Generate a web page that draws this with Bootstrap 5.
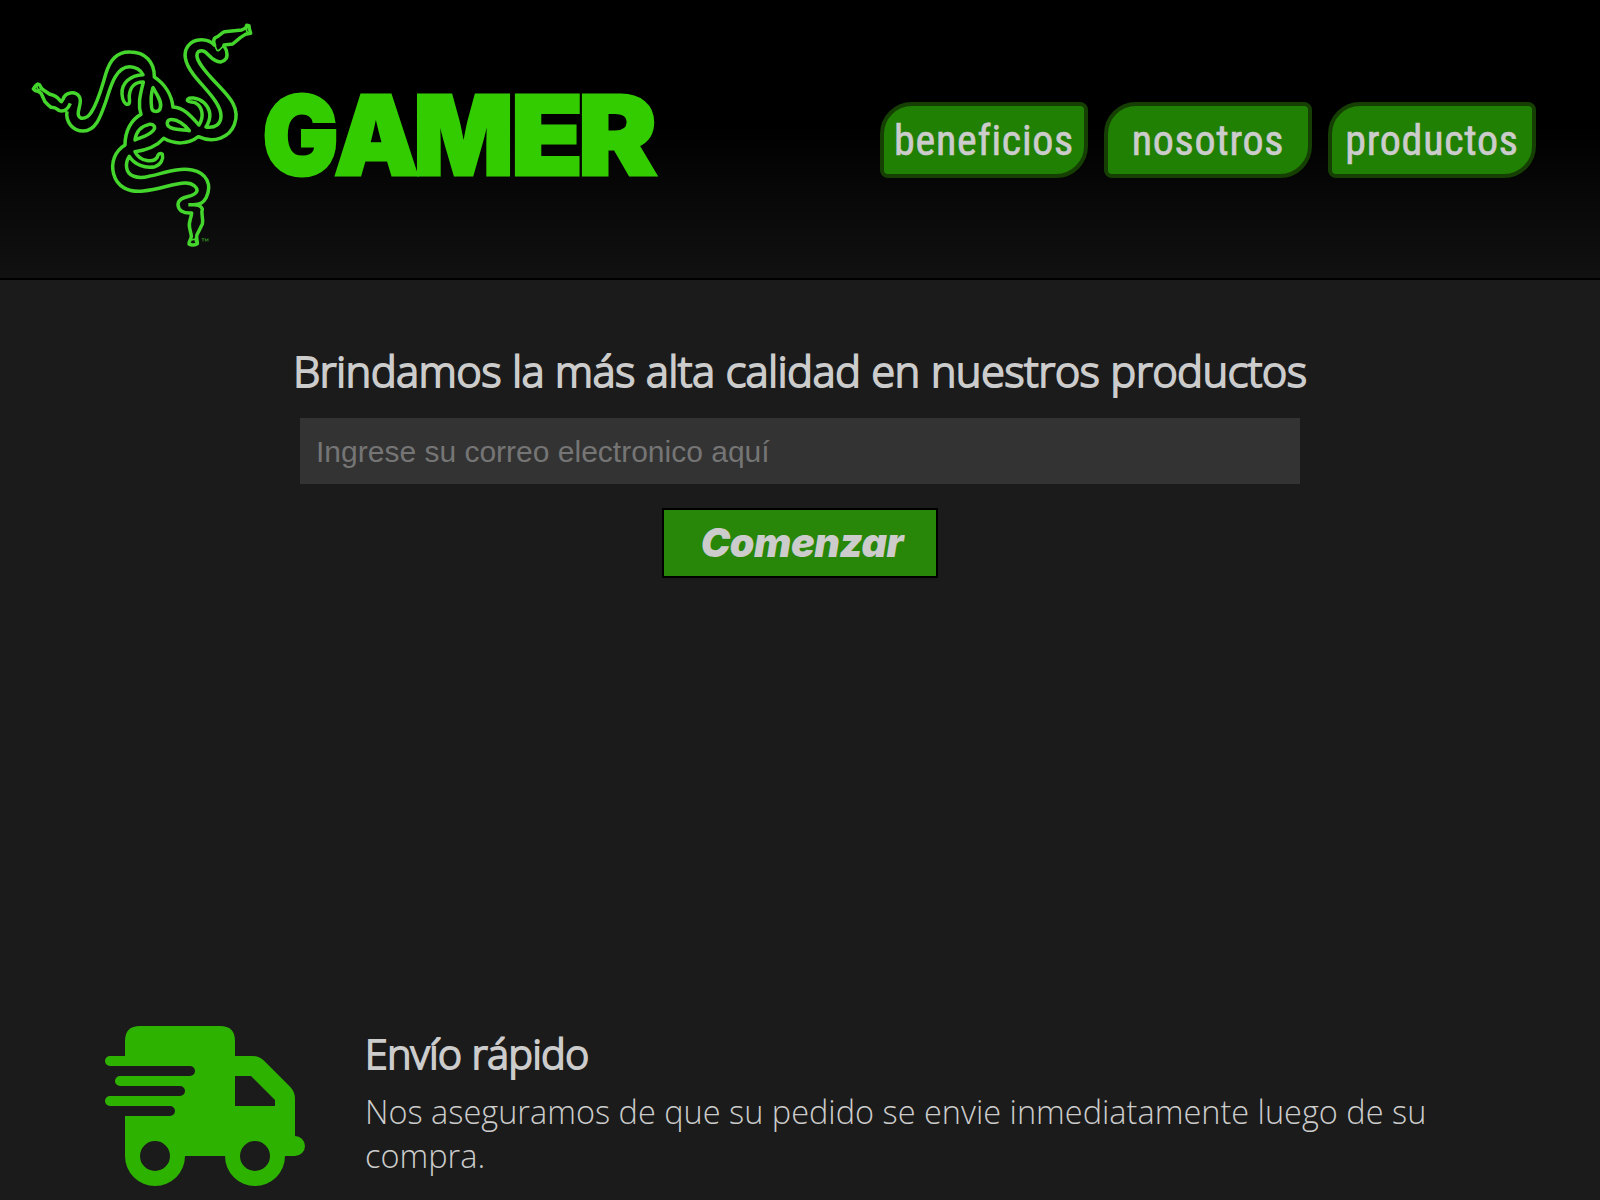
<!DOCTYPE html>
<html lang="es">
<head>
<meta charset="utf-8">
<meta name="viewport" content="width=device-width, initial-scale=1">
<title>Gamer</title>
<link href="https://cdn.jsdelivr.net/npm/bootstrap@5.3.0/dist/css/bootstrap.min.css" rel="stylesheet">
<style>
body{background:#1b1b1b;color:#ccc;font-family:"Open Sans",sans-serif;overflow:hidden;height:1200px}
.site-header{height:280px;background:linear-gradient(#000 0,#000 45%,#111 100%);border-bottom:2px solid #000;padding:10px 64px 18px 20px}
.brand-snakes{width:240px;height:250px;flex:none}
.brand-word{width:420px;height:110px;margin-top:70px;margin-left:-10px;flex:none;overflow:visible}
.brand-word text{font-family:Inter,sans-serif;font-weight:900;font-size:110px;fill:#3c0;stroke:#3c0;stroke-width:3;stroke-linejoin:miter}
.main-nav{gap:16px;margin-top:92px}
.nav-leaf{width:208px;height:76px;border:4px solid #164003;background:#208003;border-radius:32px 8px 32px 8px;color:#ccc;text-decoration:none}
.nav-leaf span{font:400 42px/70px "Roboto Condensed",Roboto,sans-serif;letter-spacing:.72px;white-space:nowrap;-webkit-text-stroke:.6px #ccc}
.hero{height:746px;padding-top:61px}
.hero-title{font-size:42.9px;line-height:60px;letter-spacing:-.2px;margin:0 0 17px;font-weight:300;white-space:nowrap;-webkit-text-stroke:2px #ccc}
.mail-field,.mail-field:focus{width:1000px;height:66px;background:#333;border:0;border-radius:0;padding:2px 16px 0;font:30px "Liberation Sans",Arial,sans-serif;color:#ccc}
.mail-field::placeholder{color:#757575}
.start-btn,.start-btn:hover{width:276px;height:70px;margin-top:24px;border:2px solid #000;border-radius:0;background:#288609;color:#ccc;padding:0 0 1px 4px;font:italic 900 39.500px/60px Inter,sans-serif;letter-spacing:-.4px}
.feature{padding-left:105px;gap:60px}
.feature-icon{width:200px;height:160px;flex:none}
.feature-title{font-size:40.800px;line-height:54px;letter-spacing:-.38px;font-weight:300;margin:0 0 10px;-webkit-text-stroke:2px #ccc}
.feature-text{font-size:32.5px;line-height:44px;font-weight:300;margin:0;width:1130px}
</style>
<script src="https://cdn.jsdelivr.net/npm/bootstrap@5.3.0/dist/js/bootstrap.bundle.min.js"></script>
</head>
<body>
<header class="site-header d-flex align-items-start">
<svg class="brand-snakes" viewBox="0 0 720 750" fill="none" stroke="#44d62c" stroke-width="10.500" stroke-linejoin="round">
<path d="M141 304C136 335 158 363 190 363C229 363 243 315 257 276C269 241 284 170 329 170C347 170 363 181 369 194C330 196 304 220 306 252C307 271 315 283 323 283C334 281 326 267 328 256C331 228 348 215 370 216C362 251 352 281 363 313C335 328 315 362 315 405C284 424 272 458 281 492C291 530 325 548 370 543C419 539 459 520 495 519C520 518 535 535 530 545C522 565 475 554 474 584C475 602 490 611 515 609C514 625 504 637 509 654L514 677C515 689 505 694 507 702C513 706 526 706 532 701C533 691 527 686 531 674L547 642C551 625 542 611 547 597C544 587 532 584 520 584L505 584M520 584C542 584 550 578 559 562C576 526 562 489 516 480C475 472 430 490 386 499C352 508 323 498 320 473C318 461 322 448 328 439C343 464 375 476 405 470C423 464 431 446 427 433C421 427 414 432 412 441C402 458 361 457 345 425C381 420 411 408 431 385C464 404 504 404 535 380C583 402 629 381 643 344C665 287 616 250 577 207C548 175 519 141 535 125C563 112 565 153 602 156C617 153 624 142 620 127C620 116 613 115 612 105L638 102L661 83L676 73L692 70L688 56L687 47L680 46L677 54L665 60L614 65C601 70 600 79 586 83C579 89 581 99 584 106C564 83 522 83 504 108C485 134 499 165 520 193C551 234 604 279 603 319C602 342 586 356 558 351C574 326 573 300 553 279C534 262 503 259 502 271C506 279 517 273 527 279C549 292 552 321 537 345C514 319 491 292 459 291C455 256 435 222 403 201C404 155 374 126 331 126C293 124 270 149 258 190C244 235 235 275 213 308C205 321 197 326 184 325C160 315 191 280 178 260C166 242 136 246 130 266L124 275L116 267C109 257 97 255 88 252L66 237L58 224L53 222L47 227L40 237L46 242L56 245L64 251L75 275L87 287L93 292C105 291 111 297 118 302C134 306 145 294 151 280"/>
<path d="M399 233C393 251 393 279 395 294C397 307 414 307 420 297C429 276 409 251 399 233ZM345 390C348 367 361 349 388 343C402 341 408 352 400 361C386 377 367 380 345 390ZM508 362C494 344 471 326 450 329C439 333 439 346 450 352C466 360 488 359 508 362Z"/>
<path d="M584 106L592 123M612 105C603 115 600 121 592 123M679 54L680 64L688 70M50 225L52 236L62 241M515 690L525 687L528 698" stroke-width="5"/>
<path d="M545 686H553M549 686V695M556 695V686L560 692L564 686V695" stroke-width="1.6"/>
</svg>
<svg class="brand-word" viewBox="0 0 420 110"><text y="94.500"><tspan x="12.500" textLength="76" lengthAdjust="spacingAndGlyphs">G</tspan><tspan x="84" textLength="85" lengthAdjust="spacingAndGlyphs">A</tspan><tspan x="163.500" textLength="100" lengthAdjust="spacingAndGlyphs">M</tspan><tspan x="261" textLength="72" lengthAdjust="spacingAndGlyphs">E</tspan><tspan x="328" textLength="79" lengthAdjust="spacingAndGlyphs">R</tspan></text></svg>
<nav class="main-nav d-flex ms-auto">
<a class="nav-leaf d-flex justify-content-center" href="#beneficios"><span>beneficios</span></a>
<a class="nav-leaf d-flex justify-content-center" href="#nosotros"><span>nosotros</span></a>
<a class="nav-leaf d-flex justify-content-center" href="#productos"><span>productos</span></a>
</nav>
</header>
<main>
<section class="hero d-flex flex-column align-items-center">
<h1 class="hero-title">Brindamos la más alta calidad en nuestros productos</h1>
<input class="mail-field form-control" type="email" placeholder="Ingrese su correo electronico aquí">
<button class="start-btn btn" type="button">Comenzar</button>
</section>
<section class="feature d-flex" id="beneficios">
<svg class="feature-icon" viewBox="45 48 600 480"><path fill="#2eb200" fill-rule="evenodd" d="M105 138V93Q105 48 150 48H390Q435 48 435 93V138H487Q508 138 523 153L601 231Q615 246 615 267V378A30 30 0 0 1 615 438H585A90 90 0 0 1 405 438H285A90 90 0 0 1 105 438V318H240A15 15 0 0 0 240 288H60A15 15 0 0 1 60 258H270A15 15 0 0 0 270 228H90A15 15 0 0 1 90 198H300A15 15 0 0 0 300 168H60A15 15 0 0 1 60 138ZM435 198V288H555V270L483 198ZM195 393A45 45 0 1 0 195 483A45 45 0 1 0 195 393ZM495 393A45 45 0 1 0 495 483A45 45 0 1 0 495 393Z"/></svg>
<div>
<h2 class="feature-title">Envío rápido</h2>
<p class="feature-text">Nos aseguramos de que su pedido se envie inmediatamente luego de su compra.</p>
</div>
</section>
</main>
</body>
</html>
